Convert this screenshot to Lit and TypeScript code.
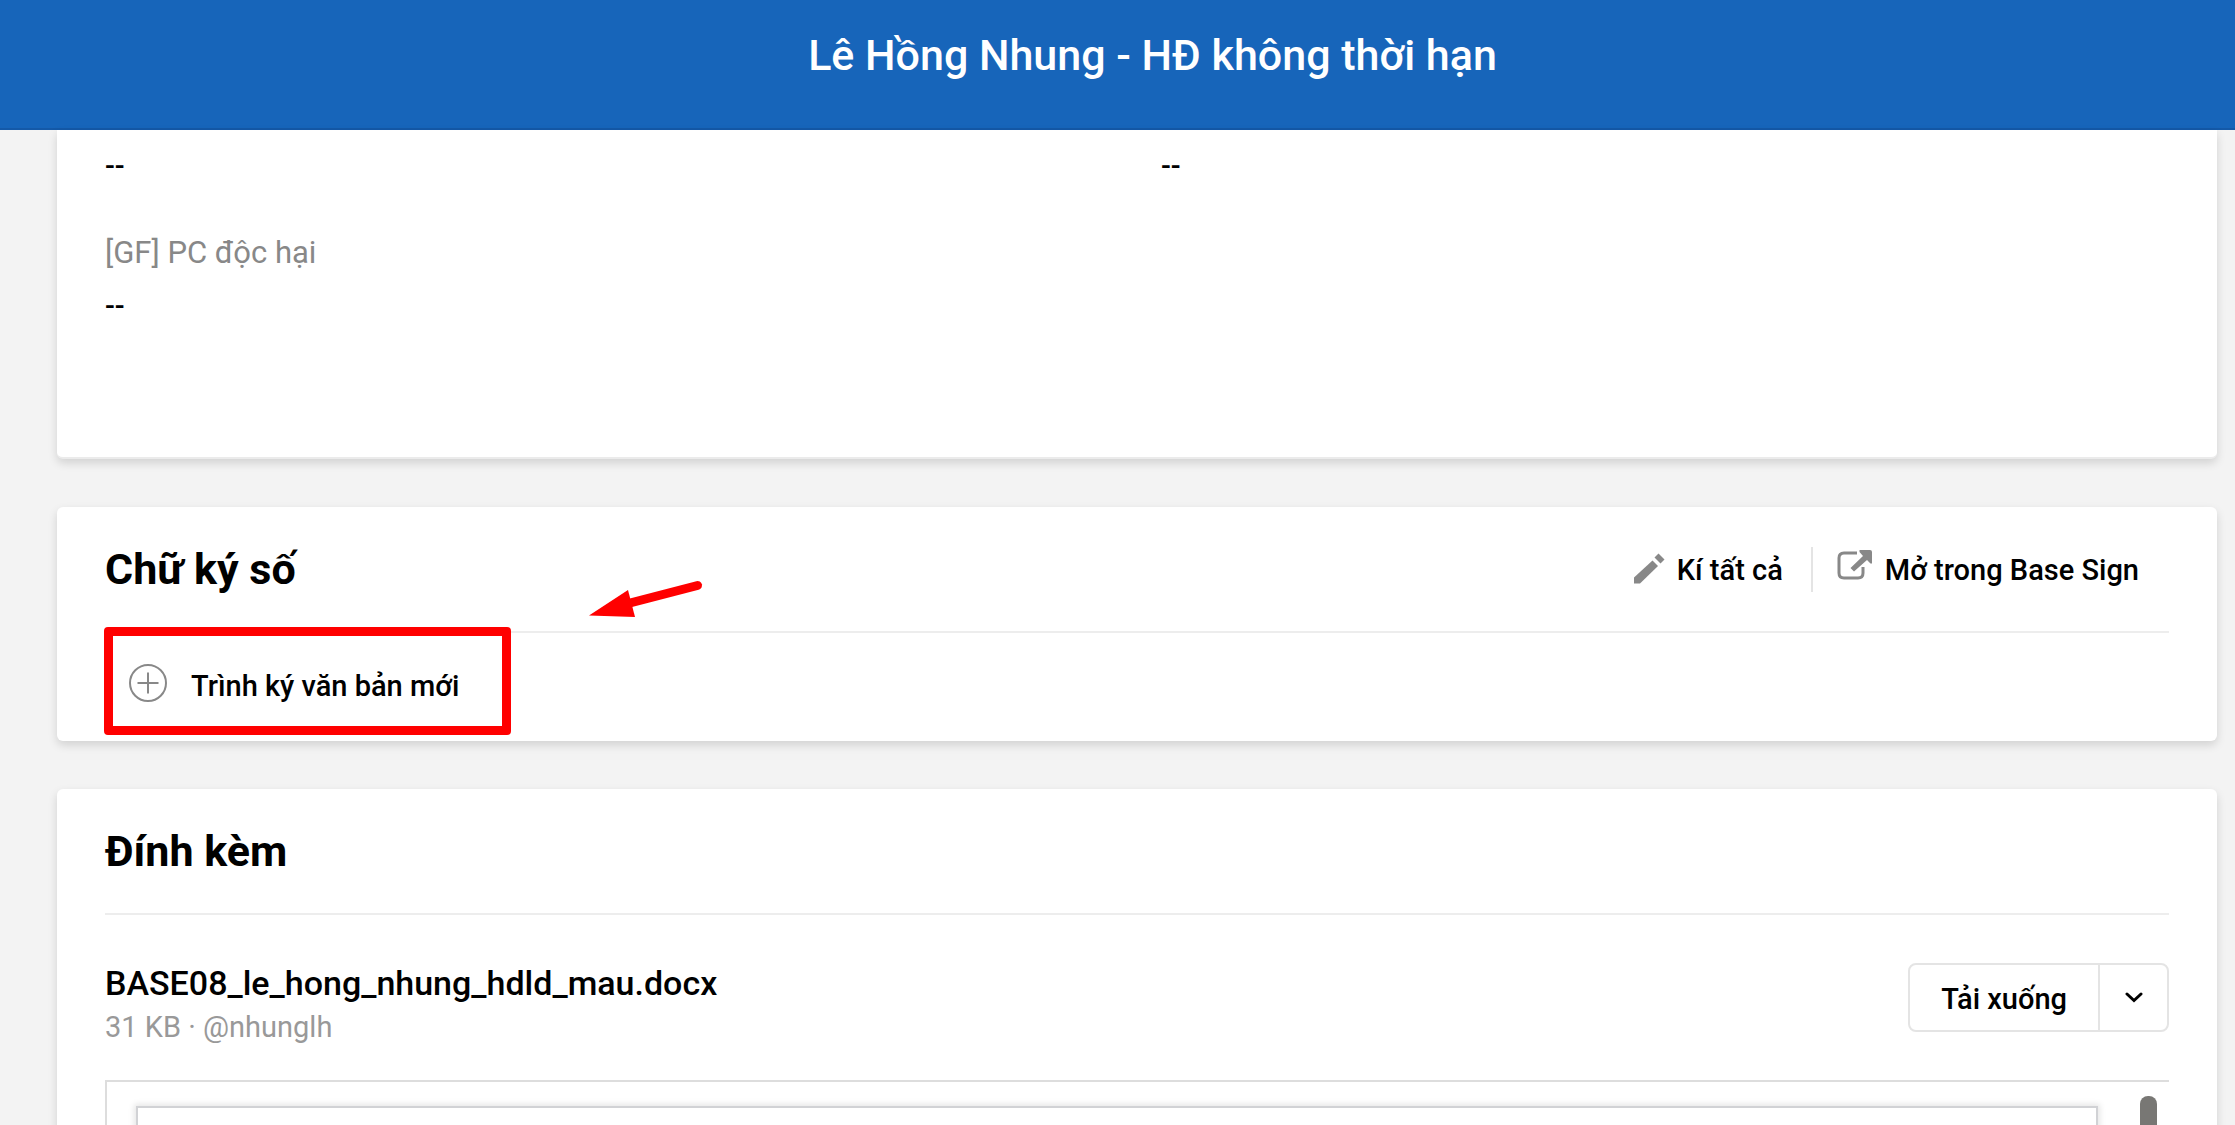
import { LitElement, html, css, svg } from "lit";
import { customElement } from "lit/decorators.js";

const pencilIcon = svg`
  <svg class="icon-pencil" viewBox="0 0 31 31" aria-hidden="true">
    <path d="M18.5 7.5 24 13 6 30.5H0V24.5Z" />
    <path d="M24.5 0.5 30.5 6.5 26.5 10.5 20.5 4.5Z" />
  </svg>`;

const openIcon = svg`
  <svg class="icon-open" viewBox="0 0 36 30" aria-hidden="true">
    <path class="stroke" d="M20 3H7Q2 3 2 8V23Q2 28 7 28H21Q26 28 26 23V17" />
    <path d="M22.500 0H33Q35 0 35 2V13.500H33.500L30 10 17 21.500 13.500 18 26 6 22.500 2Z" />
  </svg>`;

const plusIcon = svg`
  <svg class="icon-plus" viewBox="0 0 38 38" aria-hidden="true">
    <circle cx="19" cy="19" r="18" />
    <path d="M19 8.500V29.500M8.500 19H29.500" />
  </svg>`;

const chevronIcon = svg`
  <svg class="icon-chevron" viewBox="0 0 18 11" aria-hidden="true">
    <path d="M2 2 9 8.500 16 2" />
  </svg>`;

const arrowMark = svg`
  <svg class="arrow-mark" viewBox="0 0 112 38" aria-hidden="true">
    <path class="head" d="M1 35.500 40 10 47 37Z" />
    <path class="shaft" d="M42 23 109.500 5.500" />
  </svg>`;

@customElement("app-root")
export class AppRoot extends LitElement {
  static styles = css`
    :host {
      display: block;
      height: 100vh;
      overflow: hidden;
      background: #f3f3f3;
      color: #000;
      font-family: Roboto, "Noto Sans", sans-serif;
      font-size: 29px;
      line-height: 36px;
    }
    * {
      box-sizing: border-box;
    }
    h1, h2, p, dl, dt, dd {
      margin: 0;
      font-weight: inherit;
    }
    button, a {
      margin: 0;
      border: 0;
      padding: 0;
      background: none;
      color: inherit;
      font: inherit;
      font-weight: 500;
      text-decoration: none;
      cursor: pointer;
    }
    svg {
      display: block;
      flex: none;
      fill: #888;
    }
    .top {
      display: flex;
      justify-content: center;
      height: 130px;
      padding: 28px 0 0 70px;
      border-bottom: 2px solid #1459a8;
      background: #1765ba;
      color: #fff;
    }
    .title {
      font-size: 43px;
      line-height: 54px;
      font-weight: 500;
    }
    .page {
      display: flex;
      flex-direction: column;
      gap: 48px;
      padding: 0 18px 0 57px;
    }
    .card {
      padding: 0 48px;
      border-radius: 6px;
      background: #fff;
      box-shadow: 0 4px 10px rgba(0, 0, 0, 0.14);
    }
    .details {
      border-bottom: 2px solid #ebebeb;
      border-radius: 0 0 6px 6px;
      padding-top: 18px;
      padding-bottom: 133px;
    }
    .fields {
      display: grid;
      grid-template-columns: 1fr 1fr;
      gap: 51px 48px;
    }
    .value {
      font-weight: 500;
    }
    .label {
      margin-bottom: 17px;
      color: #888;
      font-size: 31px;
    }
    .head {
      display: flex;
      align-items: center;
      justify-content: space-between;
      height: 126px;
      border-bottom: 2px solid #ededed;
    }
    .heading {
      font-size: 43px;
      line-height: 54px;
      font-weight: 700;
    }
    .actions {
      display: flex;
      align-items: center;
      padding-right: 30px;
    }
    .action {
      display: flex;
      align-items: center;
      gap: 12px;
      height: 45px;
      padding-top: 2px;
    }
    .action + .action {
      margin-left: 28px;
      padding-left: 24px;
      border-left: 2px solid #e4e4e4;
    }
    .icon-pencil {
      width: 31px;
      height: 31px;
      margin-bottom: 4px;
    }
    .icon-open {
      width: 36px;
      height: 30px;
      margin-bottom: 10px;
    }
    .icon-open .stroke {
      fill: none;
      stroke: #888;
      stroke-width: 3;
    }
    .new-row {
      position: relative;
      height: 108px;
    }
    .new {
      display: flex;
      align-items: center;
      gap: 24px;
      height: 106px;
      padding-left: 24px;
    }
    .icon-plus {
      width: 38px;
      height: 38px;
      margin-bottom: 6px;
      fill: none;
      stroke: #888;
      stroke-width: 2;
    }
    .box-mark {
      position: absolute;
      top: -6px;
      left: -1px;
      width: 407px;
      height: 108px;
      border: 9px solid #f00;
      border-radius: 4px;
      pointer-events: none;
    }
    .arrow-mark {
      position: absolute;
      top: -53px;
      left: 483px;
      width: 112px;
      height: 38px;
      overflow: visible;
    }
    .arrow-mark .head {
      fill: #f00;
    }
    .arrow-mark .shaft {
      stroke: #f00;
      stroke-width: 9;
      stroke-linecap: round;
    }
    .file {
      display: flex;
      align-items: flex-start;
      justify-content: space-between;
      padding: 48px 0 35px;
    }
    .file-name {
      margin-bottom: 6px;
      font-size: 34px;
      line-height: 40px;
      font-weight: 500;
    }
    .file-meta {
      color: #999;
    }
    .download {
      display: flex;
      height: 69px;
      border: 2px solid #e4e4e4;
      border-radius: 8px;
    }
    .download-main {
      padding: 2px 31px 0;
    }
    .download-more {
      display: flex;
      align-items: center;
      justify-content: center;
      width: 69px;
      border-left: 2px solid #e4e4e4;
    }
    .icon-chevron {
      width: 18px;
      height: 11px;
      fill: none;
      stroke: #000;
      stroke-width: 3;
      stroke-linecap: round;
    }
    .preview {
      display: flex;
      gap: 42px;
      height: 480px;
      border: 2px solid #ddd;
      border-right: 0;
      padding: 14px 12px 14px 29px;
    }
    .sheet {
      flex: 1;
      margin-top: 10px;
      border: 2px solid #d1d2d5;
      background: #fff;
      box-shadow: 0 0 6px 2px rgba(0, 0, 0, 0.1);
    }
    .thumb {
      width: 17px;
      border-radius: 8px;
      background: #787774;
    }
  `;

  render() {
    return html`
      <header class="top">
        <h1 class="title">Lê Hồng Nhung - HĐ không thời hạn</h1>
      </header>
      <main class="page">
        <section class="card details">
          <div class="fields">
            <p class="value">--</p>
            <p class="value">--</p>
            <dl>
              <dt class="label">[GF] PC độc hại</dt>
              <dd class="value">--</dd>
            </dl>
          </div>
        </section>

        <section class="card">
          <div class="head">
            <h2 class="heading">Chữ ký số</h2>
            <div class="actions">
              <button class="action" type="button">${pencilIcon}Kí tất cả</button>
              <a class="action" href="#sign">${openIcon}Mở trong Base Sign</a>
            </div>
          </div>
          <div class="new-row">
            <button class="new" type="button">${plusIcon}Trình ký văn bản mới</button>
            <div class="box-mark"></div>
            ${arrowMark}
          </div>
        </section>

        <section class="card">
          <div class="head">
            <h2 class="heading">Đính kèm</h2>
          </div>
          <div class="file">
            <div>
              <p class="file-name">BASE08_le_hong_nhung_hdld_mau.docx</p>
              <p class="file-meta">31 KB · @nhunglh</p>
            </div>
            <div class="download">
              <button class="download-main" type="button">Tải xuống</button>
              <button class="download-more" type="button" aria-label="Tải xuống">${chevronIcon}</button>
            </div>
          </div>
          <div class="preview">
            <div class="sheet"></div>
            <div class="thumb"></div>
          </div>
        </section>
      </main>
    `;
  }
}
